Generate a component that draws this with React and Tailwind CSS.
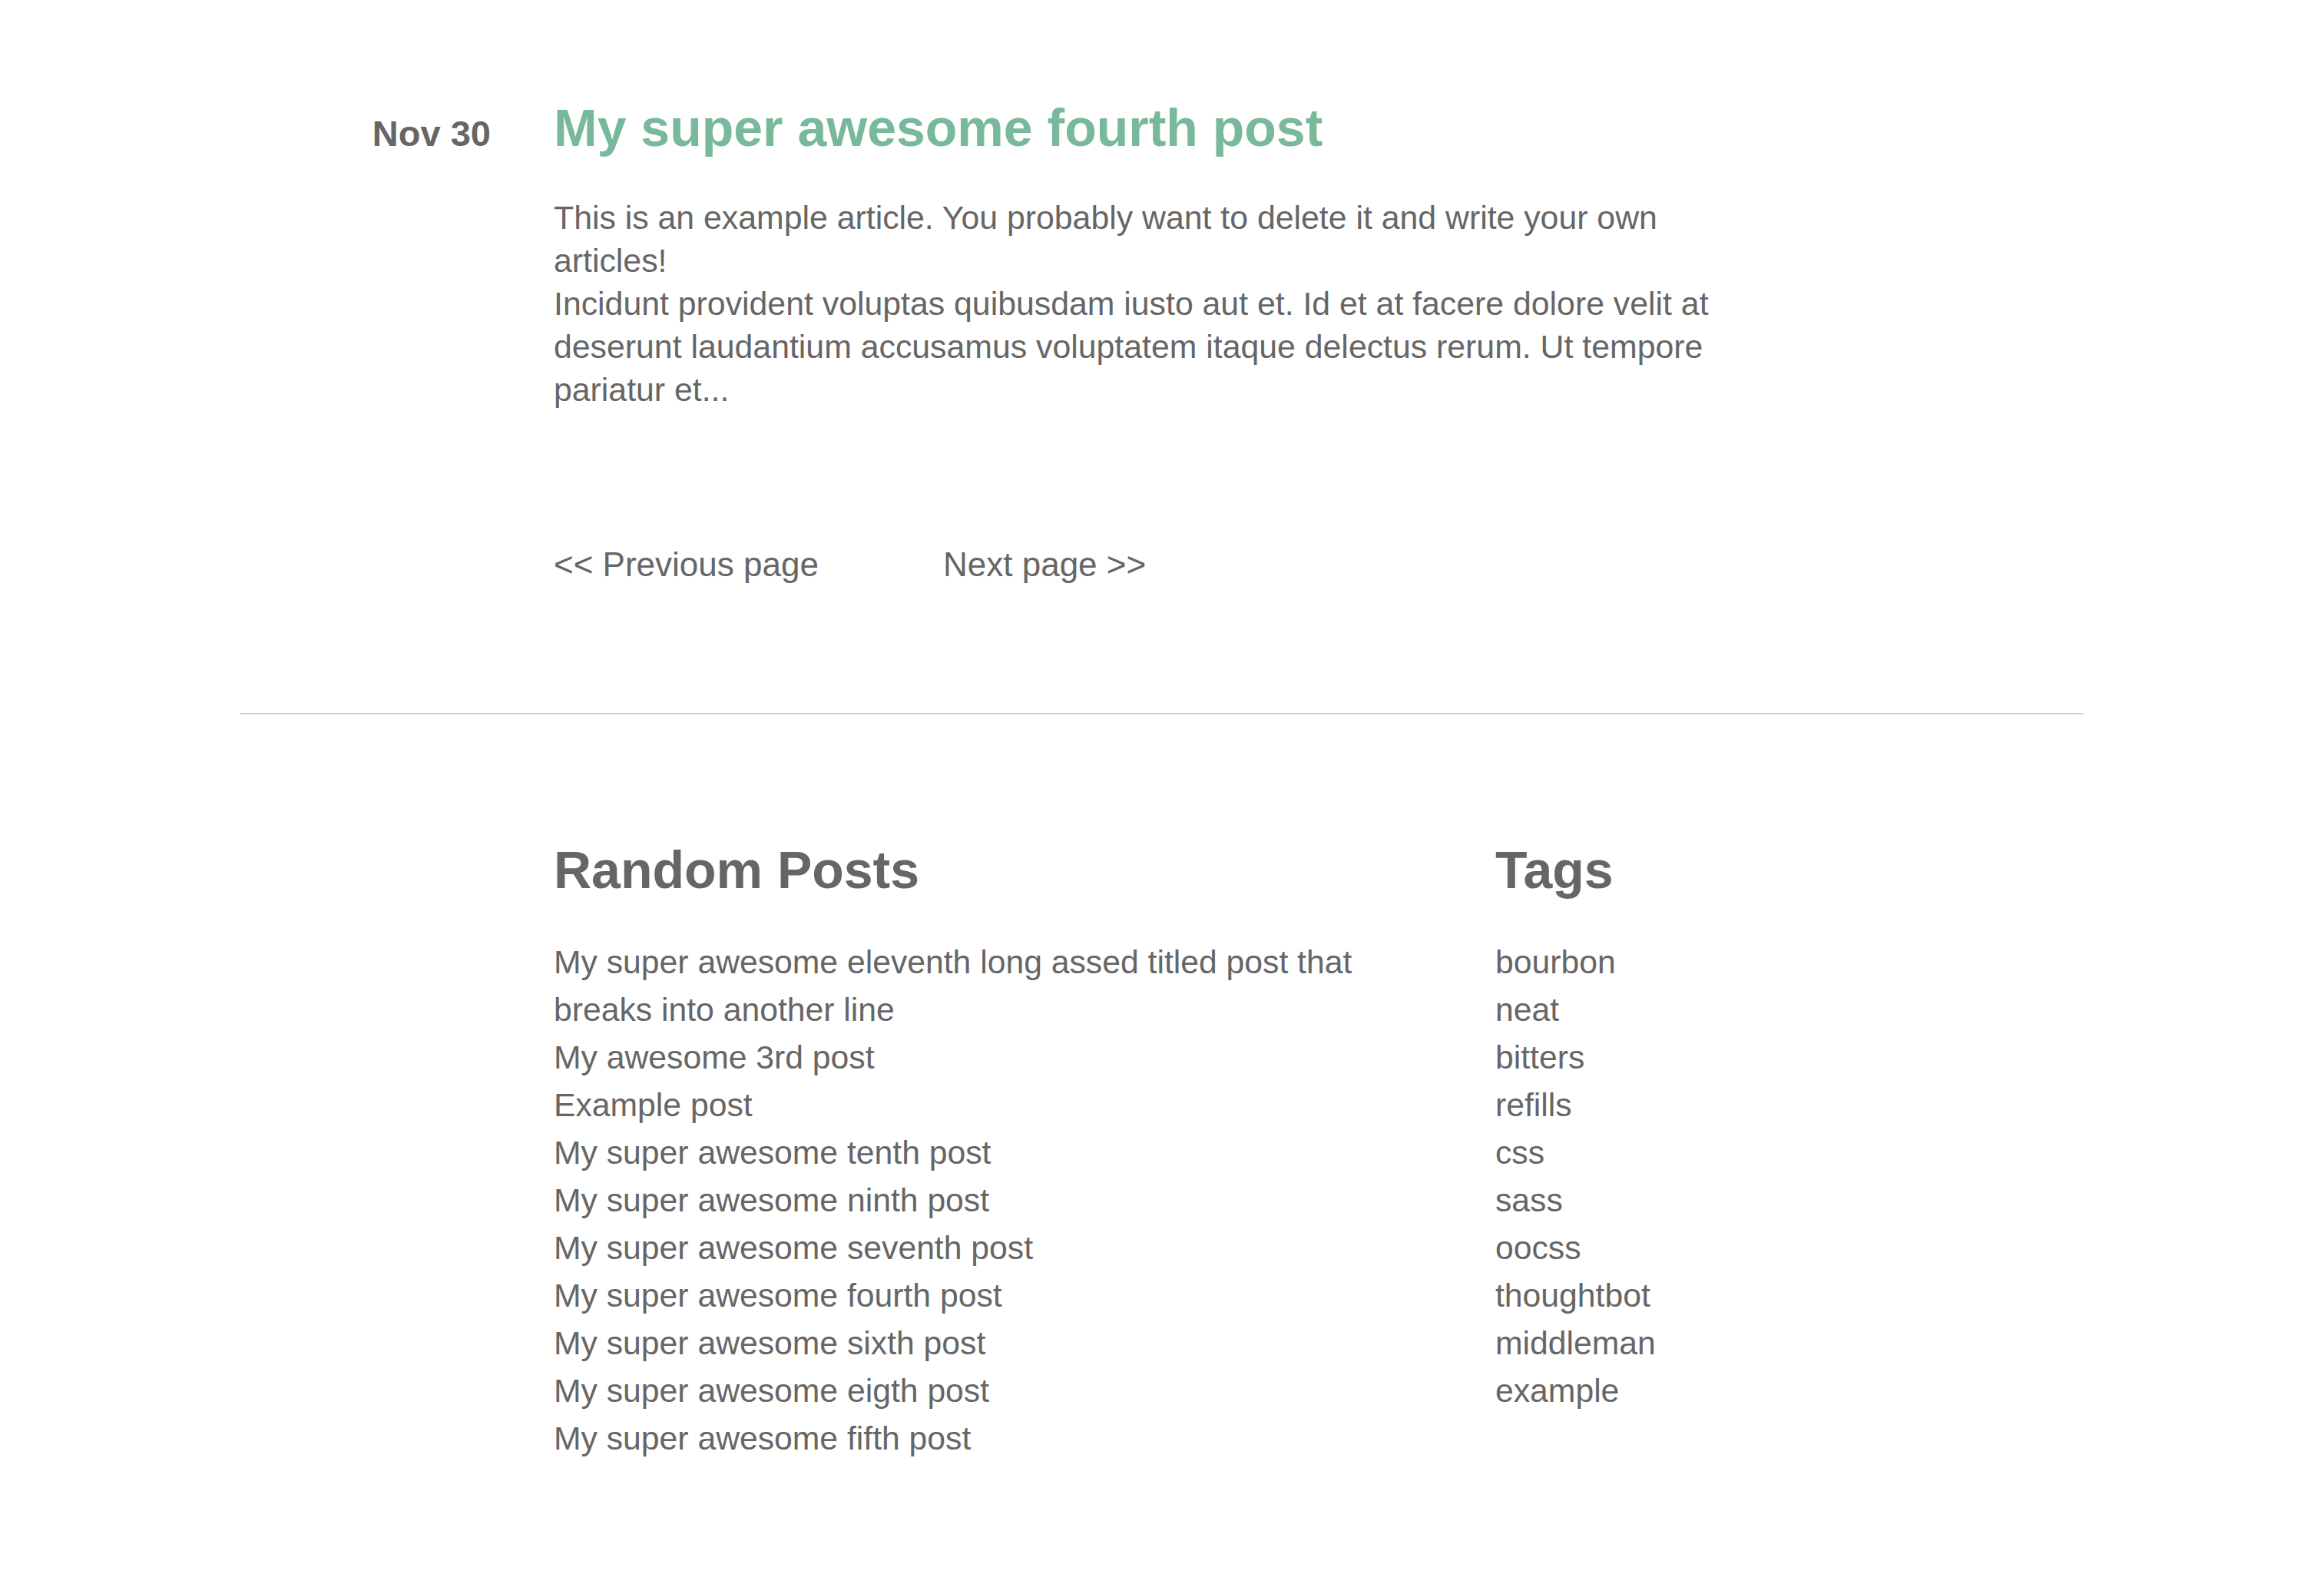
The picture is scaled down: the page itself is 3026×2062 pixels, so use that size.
import React from "react";

const randomPosts = [
  "My super awesome eleventh long assed titled post that breaks into another line",
  "My awesome 3rd post",
  "Example post",
  "My super awesome tenth post",
  "My super awesome ninth post",
  "My super awesome seventh post",
  "My super awesome fourth post",
  "My super awesome sixth post",
  "My super awesome eigth post",
  "My super awesome fifth post",
];

const tags = [
  "bourbon",
  "neat",
  "bitters",
  "refills",
  "css",
  "sass",
  "oocss",
  "thoughtbot",
  "middleman",
  "example",
];

function App() {
  return (
    <div className="min-h-screen bg-white text-[#666666] font-['Liberation_Sans',Arial,sans-serif]">
      <div className="mx-auto w-[2400px] pt-[132px] pb-[98px]">
        {/* article */}
        <article className="grid grid-cols-[408px_1fr] items-baseline">
          <div className="pr-[82px] text-right text-[47px] font-bold leading-none">Nov 30</div>
          <div>
            <h1 className="text-[68px] font-bold leading-none text-[#78b89b]">
              <a href="#">My super awesome fourth post</a>
            </h1>
          </div>
        </article>

        <div className="ml-[408px]">
          <div className="mt-[55px] w-[1540px] text-[42.8px] leading-[56px]">
            <p>This is an example article. You probably want to delete it and write your own articles!</p>
            <p>
              Incidunt provident voluptas quibusdam iusto aut et. Id et at facere dolore velit at deserunt
              laudantium accusamus voluptatem itaque delectus rerum. Ut tempore pariatur et...
            </p>
          </div>

          <div className="mt-[172px] flex text-[44px] leading-[56px]">
            <a href="#" className="w-[507px]">&lt;&lt; Previous page</a>
            <a href="#">Next page &gt;&gt;</a>
          </div>
        </div>

        <hr className="mt-[165px] border-t-2 border-[#cccccc]" />

        {/* footer */}
        <footer className="ml-[408px] pt-[168px] grid grid-cols-[1100px_auto] gap-x-[126px]">
          <div>
            <h2 className="text-[68px] font-bold leading-none">Random Posts</h2>
            <ul className="mt-[55px] text-[42.7px] leading-[62px]">
              {randomPosts.map((post) => (
                <li key={post}>
                  <a href="#">{post}</a>
                </li>
              ))}
            </ul>
          </div>
          <div>
            <h2 className="text-[68px] font-bold leading-none">Tags</h2>
            <ul className="mt-[55px] text-[42.7px] leading-[62px]">
              {tags.map((tag) => (
                <li key={tag}>
                  <a href="#">{tag}</a>
                </li>
              ))}
            </ul>
          </div>
        </footer>
      </div>
    </div>
  );
}

export default App;
